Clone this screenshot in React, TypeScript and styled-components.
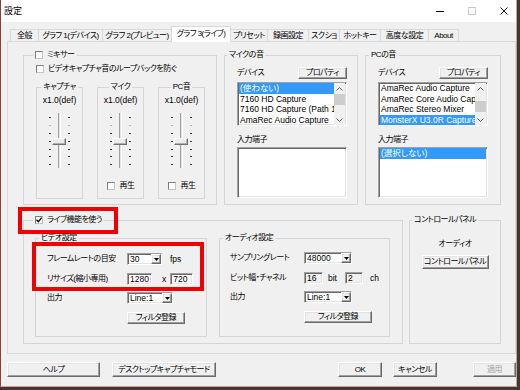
import React from "react";
import styled, { createGlobalStyle, css } from "styled-components";

const GlobalStyle = createGlobalStyle`
  html, body { margin: 0; padding: 0; }
  body {
    background: #3d3934;
    font-family: "Liberation Sans", "Noto Sans CJK JP", sans-serif;
    font-size: 8px;
    letter-spacing: -0.5px;
    line-height: 10px;
    color: #000;
    font-feature-settings: "palt";
  }
  *, *::before, *::after { box-sizing: border-box; }
`;

const latin = css`
  font-size: 8.5px;
  letter-spacing: 0;
`;

const sunken = css`
  border: 1px solid;
  border-color: #a0a0a0 #ffffff #ffffff #a0a0a0;
  box-shadow: inset 1px 1px 0 #696969, inset -1px -1px 0 #e3e3e3;
`;

const raised = css`
  border: 1px solid;
  border-color: #ffffff #696969 #696969 #ffffff;
  box-shadow: inset -1px -1px 0 #a0a0a0, inset 1px 1px 0 #e3e3e3;
`;

const Window = styled.div`
  width: 517px;
  height: 387px;
  display: flex;
  flex-direction: column;
  background: #f0f0f0;
  border-left: 1px solid #8f3c3a;
  border-right: 1px solid #e3988c;
  border-bottom: 1px solid #e3988c;
`;

const TitleBar = styled.div`
  height: 22px;
  flex: none;
  display: flex;
  align-items: center;
  background: #fff;
  padding-left: 3px;
`;

const TitleText = styled.span`
  flex: 1;
  font-size: 9px;
  letter-spacing: 0;
`;

const CaptionButtons = styled.div`
  display: flex;
  align-items: center;
  gap: 24px;
  margin-right: 8px;
`;

const TabStrip = styled.div`
  height: 19px;
  flex: none;
  display: flex;
  align-items: flex-end;
  padding-left: 9px;
  position: relative;
  z-index: 1;
`;

const Tab = styled.div<{ $w: number; $active?: boolean; $last?: boolean }>`
  width: ${(p) => p.$w}px;
  height: ${(p) => (p.$active ? 16 : 12)}px;
  margin-bottom: ${(p) => (p.$active ? -1 : 0)}px;
  margin-right: ${(p) => (p.$active ? -1 : 0)}px;
  padding-bottom: ${(p) => (p.$active ? 2 : 0)}px;
  position: relative;
  z-index: ${(p) => (p.$active ? 2 : 1)};
  display: flex;
  align-items: center;
  justify-content: center;
  white-space: nowrap;
  background: ${(p) => (p.$active ? "#ffffff" : "#f0f0f0")};
  border-top: 1px solid #d9d9d9;
  border-left: 1px solid #d9d9d9;
  border-right: ${(p) => (p.$active || p.$last ? "1px solid #d9d9d9" : "none")};
`;

const Panel = styled.div`
  margin-left: 6px;
  width: 509px;
  height: 313px;
  flex: none;
  border: 1px solid #d9d9d9;
  padding: 8px 0 0 15px;
  display: flex;
  flex-direction: column;
  gap: 10px;
`;

const GroupRow = styled.div<{ $gap: number }>`
  display: flex;
  align-items: flex-start;
  gap: ${(p) => p.$gap}px;
`;

const Group = styled.fieldset<{ $w: number; $h: number; $pl?: number; $pt?: number }>`
  margin: 0;
  min-width: 0;
  flex: none;
  width: ${(p) => p.$w}px;
  height: ${(p) => p.$h}px;
  padding: ${(p) => p.$pt ?? 0}px 0 0 ${(p) => p.$pl ?? 0}px;
  border: 1px solid #d5d5d5;
`;

const Legend = styled.legend<{ $ml?: number; $center?: boolean }>`
  padding: 0 2px;
  height: 10px;
  line-height: 10px;
  white-space: nowrap;
  position: relative;
  margin-left: ${(p) => (p.$center ? "auto" : `${p.$ml ?? 0}px`)};
  margin-right: ${(p) => (p.$center ? "auto" : "0")};
`;

const LiveLegend = styled(Legend)`
  &::after {
    content: "";
    position: absolute;
    left: -15px;
    top: -8px;
    width: 100px;
    height: 27px;
    border: 4px solid #f00000;
    pointer-events: none;
  }
`;

const CheckRow = styled.div<{ $gap?: number }>`
  display: flex;
  width: max-content;
  align-items: center;
  gap: ${(p) => p.$gap ?? 4}px;
  height: 10px;
  white-space: nowrap;
`;

const CheckBox = styled.span`
  width: 8px;
  height: 8px;
  flex: none;
  display: inline-flex;
  align-items: center;
  justify-content: center;
  background: #fff;
  border: 1px solid;
  border-color: #7e7e7e #c4c4c4 #c4c4c4 #7e7e7e;
`;

const MixerRow = styled.div`
  display: flex;
  gap: 14px;
  margin-top: 8px;
`;

const ChannelBody = styled.div`
  display: flex;
  flex-direction: column;
  align-items: center;
  padding-top: 3px;
`;

const Gain = styled.div`
  ${latin}
  height: 10px;
  white-space: nowrap;
`;

const SliderBox = styled.div`
  margin-top: 8px;
  height: 55px;
  display: flex;
  gap: 7px;
`;

const Ticks = styled.div`
  display: flex;
  flex-direction: column;
  gap: 6.9px;
  padding-top: 4px;
`;

const Tick = styled.span<{ $light?: boolean }>`
  width: 2px;
  height: 1px;
  background: ${(p) => (p.$light ? "#b8b8b8" : "#3a3a3a")};
`;

const Track = styled.div`
  width: 3px;
  height: 55px;
  position: relative;
  background: #e4e4e4;
  border-left: 1px solid #a0a0a0;
  border-right: 1px solid #ffffff;
`;

const Thumb = styled.div`
  position: absolute;
  left: -7px;
  top: 25px;
  width: 14px;
  height: 7px;
  background: #ececec;
  border: 1px solid;
  border-color: #ffffff #707070 #707070 #ffffff;
  box-shadow: inset -1px -1px 0 #b0b0b0;
`;

const PlayRow = styled(CheckRow)`
  margin-top: 13px;
`;

const DeviceRow = styled.div`
  width: 110px;
  height: 12px;
  display: flex;
  align-items: center;
  justify-content: space-between;
`;

const ListBox = styled.div<{ $h: number; $mt: number }>`
  width: 110px;
  height: ${(p) => p.$h}px;
  margin-top: ${(p) => p.$mt}px;
  display: flex;
  background: #fff;
  padding: 0 1px 0 0;
  ${sunken}
`;

const ListItems = styled.div`
  flex: 1;
  min-width: 0;
  overflow: hidden;
  padding-left: 1px;
`;

const ListItem = styled.div<{ $sel?: boolean }>`
  ${latin}
  height: 10.5px;
  line-height: 10.5px;
  padding-left: 1px;
  white-space: nowrap;
  overflow: hidden;
  background: ${(p) => (p.$sel ? "#3399ff" : "transparent")};
  color: ${(p) => (p.$sel ? "#ffffff" : "#000000")};
`;

const ScrollBar = styled.div`
  width: 11px;
  flex: none;
  display: flex;
  flex-direction: column;
  background: #f0f0f0;
`;

const ScrollArrow = styled.div`
  height: 11px;
  flex: none;
  display: flex;
  align-items: center;
  justify-content: center;
`;

const ScrollTrack = styled.div`
  flex: 1;
`;

const ScrollThumb = styled.div<{ $top: number }>`
  margin-top: ${(p) => p.$top}px;
  height: 11px;
  background: #cdcdcd;
`;

const Caption = styled.div<{ $mt: number }>`
  height: 10px;
  margin-top: ${(p) => p.$mt}px;
  white-space: nowrap;
`;

const Button = styled.button<{ $w: number; $h?: number; $ml?: number; $disabled?: boolean }>`
  width: ${(p) => p.$w}px;
  height: ${(p) => p.$h ?? 12}px;
  margin: 0 0 0 ${(p) => p.$ml ?? 0}px;
  flex: none;
  padding: 0;
  font: inherit;
  font-feature-settings: inherit;
  letter-spacing: inherit;
  line-height: ${(p) => (p.$h ?? 12) - 2}px;
  color: ${(p) => (p.$disabled ? "#a0a0a0" : "#000")};
  background: #f0f0f0;
  white-space: nowrap;
  overflow: visible;
  ${raised}
`;

const Form = styled.div`
  display: flex;
  flex-direction: column;
  gap: 7.5px;
`;

const Highlight = styled(Form)`
  position: relative;
  &::after {
    content: "";
    position: absolute;
    left: -15px;
    right: 2px;
    top: -11px;
    bottom: -6px;
    border: 4px solid #f00000;
    pointer-events: none;
  }
`;

const FieldRow = styled.div`
  display: flex;
  align-items: center;
  height: 12px;
`;

const FieldLabel = styled.span<{ $w: number }>`
  width: ${(p) => p.$w}px;
  flex: none;
  white-space: nowrap;
`;

const Unit = styled.span<{ $ml: number; $mr?: number }>`
  ${latin}
  margin-left: ${(p) => p.$ml}px;
  margin-right: ${(p) => p.$mr ?? 0}px;
  white-space: nowrap;
`;

const Combo = styled.div<{ $w: number }>`
  width: ${(p) => p.$w}px;
  height: 12px;
  flex: none;
  display: flex;
  background: #fff;
  ${sunken}
`;

const ComboValue = styled.span`
  ${latin}
  flex: 1;
  padding-left: 2px;
  line-height: 10px;
  white-space: nowrap;
`;

const ComboButton = styled.span`
  width: 10px;
  height: 10px;
  display: flex;
  align-items: center;
  justify-content: center;
  background: #f0f0f0;
  ${raised}
`;

const TextBox = styled.div<{ $w: number; $readonly?: boolean }>`
  ${latin}
  width: ${(p) => p.$w}px;
  height: 12px;
  flex: none;
  padding-left: 2px;
  line-height: 10px;
  background: ${(p) => (p.$readonly ? "#f0f0f0" : "#fff")};
  ${sunken}
`;

const ControlBody = styled.div`
  display: flex;
  flex-direction: column;
  align-items: center;
  gap: 6px;
  padding-top: 14px;
`;

const Footer = styled.div`
  margin: 8px 0 0 6px;
  width: 509px;
  display: flex;
`;

const Spacer = styled.div`
  flex: 1;
`;

const TABS = [
  { label: "全般", w: 28 },
  { label: "グラフ 1(デバイス)", w: 64 },
  { label: "グラフ 2(プレビュー)", w: 69 },
  { label: "グラフ 3(ライブ)", w: 60, active: true },
  { label: "プリセット", w: 37 },
  { label: "録画設定", w: 41 },
  { label: "スクショ", w: 31 },
  { label: "ホットキー", w: 41 },
  { label: "高度な設定", w: 48 },
  { label: "About", w: 31, last: true },
];

const TICK_SHADES = [false, true, false, false, false, false, false];

function Mark() {
  return (
    <svg width="6" height="6" viewBox="0 0 6 6">
      <path d="M0.5 2.8 L2.3 4.8 L5.6 0.6" fill="none" stroke="#000" strokeWidth="1.3" />
    </svg>
  );
}

function MixerChannel({ label, play }: { label: string; play?: boolean }) {
  return (
    <Group $w={47} $h={117}>
      <Legend $center>{label}</Legend>
      <ChannelBody>
        <Gain>x1.0(def)</Gain>
        <SliderBox>
          <Ticks>
            {TICK_SHADES.map((l, i) => (
              <Tick key={i} $light={l} />
            ))}
          </Ticks>
          <Track>
            <Thumb />
          </Track>
          <Ticks>
            {TICK_SHADES.map((l, i) => (
              <Tick key={i} $light={l} />
            ))}
          </Ticks>
        </SliderBox>
        {play && (
          <PlayRow $gap={5}>
            <CheckBox />
            再生
          </PlayRow>
        )}
      </ChannelBody>
    </Group>
  );
}

function DeviceList({
  h,
  mt,
  items,
  selected,
  thumb,
}: {
  h: number;
  mt: number;
  items: string[];
  selected: number;
  thumb?: number;
}) {
  return (
    <ListBox $h={h} $mt={mt}>
      <ListItems>
        {items.map((it, i) => (
          <ListItem key={i} $sel={i === selected}>
            {it}
          </ListItem>
        ))}
      </ListItems>
      {thumb !== undefined && (
        <ScrollBar>
          <ScrollArrow>
            <svg width="7" height="4" viewBox="0 0 7 4">
              <polyline points="0.5,3.5 3.5,0.5 6.5,3.5" fill="none" stroke="#606060" />
            </svg>
          </ScrollArrow>
          <ScrollTrack>
            <ScrollThumb $top={thumb} />
          </ScrollTrack>
          <ScrollArrow>
            <svg width="7" height="4" viewBox="0 0 7 4">
              <polyline points="0.5,0.5 3.5,3.5 6.5,0.5" fill="none" stroke="#606060" />
            </svg>
          </ScrollArrow>
        </ScrollBar>
      )}
    </ListBox>
  );
}

function ComboBox({ w, value }: { w: number; value: string }) {
  return (
    <Combo $w={w}>
      <ComboValue>{value}</ComboValue>
      <ComboButton>
        <svg width="5" height="3" viewBox="0 0 5 3">
          <path d="M0 0H5L2.5 3Z" fill="#000" />
        </svg>
      </ComboButton>
    </Combo>
  );
}

function SoundGroup({
  title,
  w,
  legendMl,
  items,
  selected,
  thumb,
  inputs,
}: {
  title: string;
  w: number;
  legendMl: number;
  items: string[];
  selected: number;
  thumb: number;
  inputs: string[];
}) {
  return (
    <Group $w={w} $h={155} $pl={12} $pt={7}>
      <Legend $ml={legendMl}>{title}</Legend>
      <DeviceRow>
        <span>デバイス</span>
        <Button $w={49}>プロパティ</Button>
      </DeviceRow>
      <DeviceList h={44} mt={3} items={items} selected={selected} thumb={thumb} />
      <Caption $mt={9}>入力端子</Caption>
      <DeviceList h={51} mt={2} items={inputs} selected={inputs.length ? 0 : -1} />
    </Group>
  );
}

export default function App() {
  return (
    <>
      <GlobalStyle />
      <Window>
        <TitleBar>
          <TitleText>設定</TitleText>
          <CaptionButtons>
            <svg width="8" height="8" viewBox="0 0 8 8">
              <line x1="0" y1="4.5" x2="8" y2="4.5" stroke="#000" />
            </svg>
            <svg width="8" height="8" viewBox="0 0 8 8">
              <rect x="0.5" y="0.5" width="7" height="7" fill="none" stroke="#c8c8c8" />
            </svg>
            <svg width="8" height="8" viewBox="0 0 8 8">
              <path d="M0.5 0.5 L7.5 7.5 M7.5 0.5 L0.5 7.5" stroke="#000" strokeWidth="0.9" />
            </svg>
          </CaptionButtons>
        </TitleBar>

        <TabStrip>
          {TABS.map((t) => (
            <Tab key={t.label} $w={t.w} $active={t.active} $last={t.last}>
              {t.label}
            </Tab>
          ))}
        </TabStrip>

        <Panel>
          <GroupRow $gap={7}>
            <Group $w={194} $h={155} $pl={12} $pt={4}>
              <Legend $ml={-3}>
                <CheckRow>
                  <CheckBox />
                  ミキサー
                </CheckRow>
              </Legend>
              <CheckRow>
                <CheckBox />
                ビデオキャプチャ音のループバックを防ぐ
              </CheckRow>
              <MixerRow>
                <MixerChannel label="キャプチャ" />
                <MixerChannel label="マイク" play />
                <MixerChannel label="PC音" play />
              </MixerRow>
            </Group>

            <SoundGroup
              title="マイクの音"
              w={134}
              legendMl={-10}
              items={["(使わない)", "7160 HD Capture", "7160 HD Capture (Path 1)", "AmaRec Audio Capture"]}
              selected={0}
              thumb={0}
              inputs={[]}
            />

            <SoundGroup
              title="PCの音"
              w={136}
              legendMl={-9}
              items={["AmaRec Audio Capture", "AmaRec Core Audio Capture", "AmaRec Stereo Mixer", "MonsterX U3.0R Capture"]}
              selected={3}
              thumb={7}
              inputs={["(選択しない)"]}
            />
          </GroupRow>

          <GroupRow $gap={6}>
            <Group $w={380} $h={129} $pl={11} $pt={8}>
              <LiveLegend $ml={-2}>
                <CheckRow>
                  <CheckBox>
                    <Mark />
                  </CheckBox>
                  ライブ機能を使う
                </CheckRow>
              </LiveLegend>
              <GroupRow $gap={12}>
                <Group $w={172} $h={104} $pl={11} $pt={10}>
                  <Legend $ml={-8}>ビデオ設定</Legend>
                  <Form>
                    <Highlight>
                      <FieldRow>
                        <FieldLabel $w={80}>フレームレートの目安</FieldLabel>
                        <ComboBox w={35} value="30" />
                        <Unit $ml={8}>fps</Unit>
                      </FieldRow>
                      <FieldRow>
                        <FieldLabel $w={80}>リサイズ(縮小専用)</FieldLabel>
                        <TextBox $w={25}>1280</TextBox>
                        <Unit $ml={10} $mr={4}>
                          x
                        </Unit>
                        <TextBox $w={23}>720</TextBox>
                      </FieldRow>
                    </Highlight>
                    <FieldRow>
                      <FieldLabel $w={80}>出力</FieldLabel>
                      <ComboBox w={46} value="Line:1" />
                    </FieldRow>
                    <FieldRow>
                      <FieldLabel $w={80} />
                      <Button $w={58}>フィルタ登録</Button>
                    </FieldRow>
                  </Form>
                </Group>

                <Group $w={171} $h={104} $pl={10} $pt={9}>
                  <Legend $ml={-7}>オーディオ設定</Legend>
                  <Form>
                    <FieldRow>
                      <FieldLabel $w={74}>サンプリングレート</FieldLabel>
                      <ComboBox w={48} value="48000" />
                    </FieldRow>
                    <FieldRow>
                      <FieldLabel $w={74}>ビット幅・チャネル</FieldLabel>
                      <TextBox $w={19} $readonly>
                        16
                      </TextBox>
                      <Unit $ml={5} $mr={8}>
                        bit
                      </Unit>
                      <TextBox $w={18} $readonly>
                        2
                      </TextBox>
                      <Unit $ml={7}>ch</Unit>
                    </FieldRow>
                    <FieldRow>
                      <FieldLabel $w={74}>出力</FieldLabel>
                      <ComboBox w={48} value="Line:1" />
                    </FieldRow>
                    <FieldRow>
                      <FieldLabel $w={74} />
                      <Button $w={68}>フィルタ登録</Button>
                    </FieldRow>
                  </Form>
                </Group>
              </GroupRow>
            </Group>

            <Group $w={92} $h={129}>
              <Legend $ml={2}>コントロールパネル</Legend>
              <ControlBody>
                <span>オーディオ</span>
                <Button $w={67} $h={14}>
                  コントロールパネル
                </Button>
              </ControlBody>
            </Group>
          </GroupRow>
        </Panel>

        <Footer>
          <Button $w={93} $h={15}>
            ヘルプ
          </Button>
          <Button $w={104} $h={15} $ml={12}>
            デスクトップキャプチャモード
          </Button>
          <Spacer />
          <Button $w={44} $h={15}>
            OK
          </Button>
          <Button $w={44} $h={15} $ml={11}>
            キャンセル
          </Button>
          <Button $w={43} $h={15} $ml={36} $disabled>
            適用
          </Button>
        </Footer>
      </Window>
    </>
  );
}
